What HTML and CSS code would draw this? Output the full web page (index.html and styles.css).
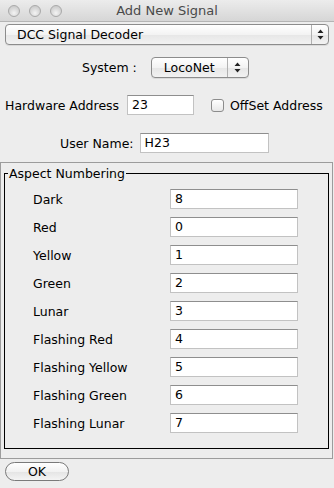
FILE: index.html
```html
<!DOCTYPE html>
<html>
<head>
<meta charset="utf-8">
<link rel="stylesheet" href="styles.css">
</head>
<body>
<div class="window">
  <div class="titlebar">
    <div class="lights">
      <span class="light"></span><span class="light"></span><span class="light"></span>
    </div>
    <div class="title">Add New Signal</div>
  </div>
  <div class="combo combo-wide">
    <span class="combo-text">DCC Signal Decoder</span>
    <span class="combo-arrows"><svg width="7" height="11" viewBox="0 0 7 11"><path d="M3.5 0.5 L6.5 4 L0.5 4 Z M0.5 7 L6.5 7 L3.5 10.5 Z" fill="#222"/></svg></span>
  </div>
  <div class="row row-system">
    <span class="lbl">System :</span>
    <div class="combo combo-small">
      <span class="combo-text">LocoNet</span>
      <span class="combo-arrows"><svg width="7" height="11" viewBox="0 0 7 11"><path d="M3.5 0.5 L6.5 4 L0.5 4 Z M0.5 7 L6.5 7 L3.5 10.5 Z" fill="#222"/></svg></span>
    </div>
  </div>
  <div class="row row-hw">
    <span class="lbl lbl-hw">Hardware Address</span>
    <div class="field field-hw">23</div>
    <span class="check"></span>
    <span class="lbl">OffSet Address</span>
  </div>
  <div class="row row-user">
    <span class="lbl">User Name:</span>
    <div class="field field-user">H23</div>
  </div>
  <div class="panel">
    <fieldset class="aspects">
      <legend>Aspect Numbering</legend>
      <div class="arow"><span class="alabel">Dark</span><div class="field afield">8</div></div>
      <div class="arow"><span class="alabel">Red</span><div class="field afield">0</div></div>
      <div class="arow"><span class="alabel">Yellow</span><div class="field afield">1</div></div>
      <div class="arow"><span class="alabel">Green</span><div class="field afield">2</div></div>
      <div class="arow"><span class="alabel">Lunar</span><div class="field afield">3</div></div>
      <div class="arow"><span class="alabel">Flashing Red</span><div class="field afield">4</div></div>
      <div class="arow"><span class="alabel">Flashing Yellow</span><div class="field afield">5</div></div>
      <div class="arow"><span class="alabel">Flashing Green</span><div class="field afield">6</div></div>
      <div class="arow"><span class="alabel">Flashing Lunar</span><div class="field afield">7</div></div>
    </fieldset>
  </div>
  <div class="buttons">
    <div class="btn">OK</div>
  </div>
</div>
</body>
</html>
```

FILE: styles.css
```css
* { box-sizing: border-box; }
html, body {
  margin: 0;
  padding: 0;
  background: #ededed;
}
body {
  font-family: "DejaVu Sans", "Liberation Sans", sans-serif;
  font-size: 12.5px;
  color: #000;
}
.window {
  width: 334px;
  height: 488px;
  background: #ededed;
  overflow: hidden;
}
.titlebar {
  height: 22px;
  position: relative;
  background: linear-gradient(#ececec, #d6d6d6);
  border-bottom: 1px solid #b4b4b4;
  display: flex;
  align-items: center;
  justify-content: center;
}
.lights {
  position: absolute;
  left: 8px;
  top: 5px;
  display: flex;
  gap: 9px;
}
.light {
  width: 12px;
  height: 12px;
  border-radius: 50%;
  background: radial-gradient(circle at 50% 70%, #f4f4f4, #d4d4d4 60%, #c4c4c4);
  border: 1px solid #a9a9a9;
}
.title {
  font-size: 13px;
  color: #4a4a4a;
}
.combo {
  display: flex;
  align-items: center;
  height: 21px;
  border: 1px solid #8c8c8c;
  border-radius: 4px;
  background: linear-gradient(#ffffff, #f3f3f3 50%, #e6e6e6 51%, #f2f2f2);
  box-shadow: 0 1px 0 rgba(0,0,0,0.08);
}
.combo-wide {
  margin: 2px 5px 0 5px;
  width: 324px;
}
.combo-text {
  flex: 1;
  padding-left: 11px;
}
.combo-arrows {
  width: 17px;
  height: 100%;
  border-left: 1px solid #b0b0b0;
  display: flex;
  align-items: center;
  justify-content: center;
}
.combo-small {
  width: 98px;
}
.combo-small .combo-text {
  padding-left: 12px;
}
.combo-small .combo-arrows {
  width: 21px;
}
.row {
  display: flex;
  align-items: center;
}
.row-system {
  margin-top: 12px;
  padding-left: 82px;
  gap: 14px;
}
.row-hw {
  margin-top: 17px;
  padding-left: 5px;
}
.lbl-hw {
  width: 122px;
}
.field {
  height: 20px;
  background: #fff;
  border: 1px solid #c2c2c2;
  border-top-color: #8e8e8e;
  padding-left: 4px;
  line-height: 18px;
}
.field-hw {
  width: 67px;
}
.check {
  width: 13px;
  height: 13px;
  margin-left: 17px;
  margin-right: 6px;
  border: 1px solid #8c8c8c;
  border-radius: 3px;
  background: linear-gradient(#ffffff, #e8e8e8);
}
.row-user {
  margin-top: 18px;
  padding-left: 60px;
  gap: 6px;
}
.field-user {
  width: 129px;
}
.panel {
  margin: 9px 1px 0 0;
  height: 297px;
  border: 1px solid #9c9c9c;
  padding: 3px 3px 0 3px;
}
.aspects {
  margin: 0;
  border: 1px solid #000;
  padding: 8px 0 0 0;
  height: 283px;
}
.aspects legend {
  padding: 0 1px;
  margin-left: 3px;
}
.arow {
  display: flex;
  align-items: center;
  height: 20px;
  margin-bottom: 8px;
  padding-left: 28px;
}
.alabel {
  width: 137px;
}
.afield {
  width: 128px;
}
.buttons {
  padding: 3px 0 0 5px;
}
.btn {
  width: 64px;
  height: 19px;
  border: 1px solid #7a7a7a;
  border-radius: 10px;
  background: linear-gradient(#ffffff, #f2f2f2 50%, #e4e4e4 51%, #f4f4f4);
  text-align: center;
  line-height: 17px;
}
```
